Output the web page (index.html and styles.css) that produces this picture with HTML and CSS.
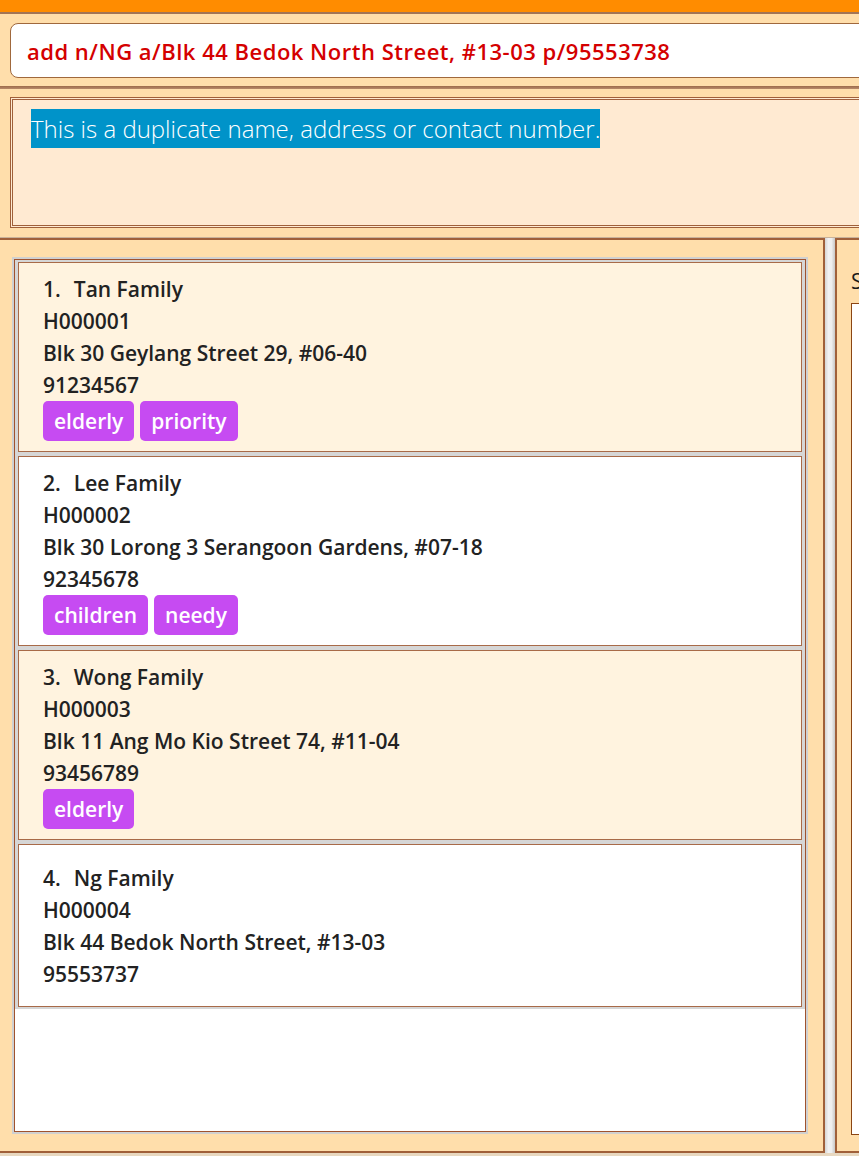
FILE: index.html
```html
<!DOCTYPE html>
<html lang="en">
<head>
<meta charset="utf-8">
<title>Households</title>
<link rel="stylesheet" href="styles.css">
</head>
<body>
<div class="app">
  <div class="topbar"></div>
  <div class="command-wrap">
    <div class="command-box">add n/NG a/Blk 44 Bedok North Street, #13-03 p/95553738</div>
  </div>
  <div class="divider-h"></div>
  <div class="result-wrap">
    <div class="result-box"><span class="result-text">This is a duplicate name, address or contact number.</span></div>
  </div>
  <div class="main">
    <div class="left-panel">
      <div class="list">
        <div class="cell">
          <div class="card odd">
            <div class="title"><span class="num">1.</span><span>Tan Family</span></div>
            <div class="line">H000001</div>
            <div class="line">Blk 30 Geylang Street 29, #06-40</div>
            <div class="line">91234567</div>
            <div class="tags"><span class="tag">elderly</span><span class="tag">priority</span></div>
          </div>
        </div>
        <div class="cell">
          <div class="card">
            <div class="title"><span class="num">2.</span><span>Lee Family</span></div>
            <div class="line">H000002</div>
            <div class="line">Blk 30 Lorong 3 Serangoon Gardens, #07-18</div>
            <div class="line">92345678</div>
            <div class="tags"><span class="tag">children</span><span class="tag">needy</span></div>
          </div>
        </div>
        <div class="cell">
          <div class="card odd">
            <div class="title"><span class="num">3.</span><span>Wong Family</span></div>
            <div class="line">H000003</div>
            <div class="line">Blk 11 Ang Mo Kio Street 74, #11-04</div>
            <div class="line">93456789</div>
            <div class="tags"><span class="tag">elderly</span></div>
          </div>
        </div>
        <div class="cell">
          <div class="card short">
            <div class="title"><span class="num">4.</span><span>Ng Family</span></div>
            <div class="line">H000004</div>
            <div class="line">Blk 44 Bedok North Street, #13-03</div>
            <div class="line">95553737</div>
          </div>
        </div>
      </div>
    </div>
    <div class="splitter"></div>
    <div class="right-panel">
      <div class="right-title">S</div>
      <div class="right-box"></div>
    </div>
  </div>
  <div class="statusbar"></div>
</div>
</body>
</html>
```

FILE: styles.css
```css
*, *::before, *::after {
  box-sizing: border-box;
}
html, body {
  margin: 0;
  padding: 0;
  overflow: hidden;
}
body {
  background: #FFDEAB;
  font-family: "Open Sans", "Noto Sans", sans-serif;
  color: #222222;
}
.app {
  width: 900px;
  height: 1156px;
  display: flex;
  flex-direction: column;
}
.topbar {
  height: 14px;
  background: #FF8C00;
  border-bottom: 2px solid #A27456;
  flex: none;
}
.command-wrap {
  padding: 9px 0 8px 10px;
  flex: none;
}
.command-box {
  height: 55px;
  border: 1px solid #A0683C;
  border-radius: 8px;
  background: #FFFFFF;
  padding-left: 16px;
  display: flex;
  align-items: center;
  color: #D40000;
  font-size: 22px;
  letter-spacing: 0.5px;
  font-weight: 550;
  white-space: nowrap;
  overflow: hidden;
}
.divider-h {
  height: 3px;
  flex: none;
  background: linear-gradient(#9C6A4A, #B98A6A);
}
.result-wrap {
  padding: 8px 0 9px 10px;
  flex: none;
}
.result-box {
  height: 131px;
  border: 3px double #A0603A;
  background: #FFEAD2;
  padding: 9px 0 0 18px;
}
.result-text {
  background: #0093C9;
  color: #FFFFFF;
  font-weight: 300;
  font-size: 24px;
  line-height: 39px;
  display: inline-block;
}
.main {
  flex: 1;
  display: flex;
  border-top: 1px solid #C9B29A;
  min-height: 0;
}
.left-panel {
  width: 825px;
  flex: none;
  border-top: 2px solid #A0603A;
  border-right: 2px solid #A0603A;
  border-bottom: 2px solid #A0603A;
  padding: 19px 17px 19px 14px;
  display: flex;
}
.list {
  flex: 1;
  border: 1px solid #A0522D;
  outline: 2px solid #D0D0D0;
  background: #FFFFFF;
  display: flex;
  flex-direction: column;
}
.cell {
  padding: 2px 3px;
  background: #D6D6D6;
}
.card {
  border: 1px solid #A86A48;
  background: #FFFFFF;
  padding: 10px 24px;
  display: flex;
  flex-direction: column;
  justify-content: center;
  font-size: 21px;
  font-weight: 600;
  line-height: 32px;
}
.card.odd {
  background: #FFF3DF;
}
.card.short {
  min-height: 163px;
}
.title {
  display: flex;
  gap: 13px;
}
.tags {
  display: flex;
  gap: 6px;
}
.tag {
  height: 40px;
  line-height: 40px;
  padding: 0 11px;
  background: #C64BF2;
  color: #FFFFFF;
  border-radius: 5px;
}
.splitter {
  width: 10px;
  flex: none;
  background: linear-gradient(to right, #D6D6D6, #F2F2F2 35%, #EEEEEE 65%, #C8C8C8);
}
.right-panel {
  flex: 1;
  border-top: 2px solid #A0603A;
  border-left: 2px solid #A0603A;
  border-bottom: 2px solid #A0603A;
  padding: 21px 0 16px 14px;
  display: flex;
  flex-direction: column;
}
.right-title {
  font-size: 21px;
  line-height: 40px;
  margin-bottom: 2px;
  color: #1A1A1A;
  white-space: nowrap;
}
.right-box {
  flex: 1;
  border: 1px solid #8B4513;
  background: #FFFFFF;
}
.statusbar {
  height: 3px;
  flex: none;
  background: #E8D8C0;
}
```
